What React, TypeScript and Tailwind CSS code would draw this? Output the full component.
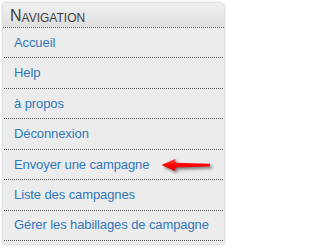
import React from "react";

const items = [
  "Accueil",
  "Help",
  "à propos",
  "Déconnexion",
  "Envoyer une campagne",
  "Liste des campagnes",
  "Gérer les habillages de campagne",
];

export default function App() {
  return (
    <div className="w-[229px] h-[248px] bg-white pt-[3px] pl-[3px]" style={{ fontFamily: '"Liberation Sans", Arial, sans-serif' }}>
      <div className="relative w-[221px] bg-[#ececec] rounded-tr-[5px] shadow-[0_0_3px_rgba(0,0,0,0.35)] pb-[3px]">
        <div className="h-[25px] flex items-end pl-[7px] pb-[3px] border-b border-dotted border-[#555] rounded-tr-[5px] bg-gradient-to-b from-[#f0f0f0] to-[#dfdfdf] text-[#3d3d3d] leading-none">
          <span className="text-[16px]">N</span>
          <span className="text-[12px]">AVIGATION</span>
        </div>
        <ul className="px-[1px]">
          {items.map((t) => (
            <li key={t} className="h-[30.43px] flex items-center pl-[10px] border-b border-dotted border-[#555] text-[13px] tracking-[-0.1px] text-[#2f77ba]">
              {t}
            </li>
          ))}
        </ul>
        <svg
          className="absolute left-[155px] top-[152px] drop-shadow-[2px_2px_1.5px_rgba(0,0,0,0.5)]"
          width="56"
          height="20"
          viewBox="0 0 56 20"
        >
          <defs>
            <linearGradient id="ar" x1="0" y1="0" x2="0" y2="1">
              <stop offset="0" stopColor="#ff5050" />
              <stop offset="0.5" stopColor="#ff0000" />
              <stop offset="1" stopColor="#e00000" />
            </linearGradient>
          </defs>
          <path
            d="M3.5 10 L17.5 3.8 Q16.5 7 18 7.8 L52 8.7 L52 11.4 L18 12.4 Q16.5 13 17.5 16.2 Z"
            fill="url(#ar)"
          />
        </svg>
      </div>
    </div>
  );
}
